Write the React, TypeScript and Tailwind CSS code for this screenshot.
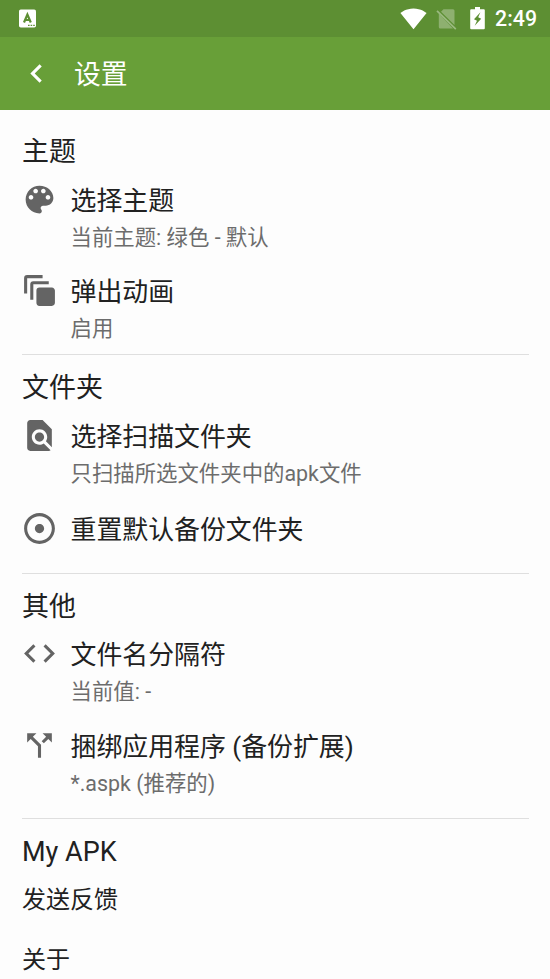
import React from 'react';
import { MdAdjust, MdAutoAwesomeMotion, MdFindInPage, MdCallSplit, MdCode, MdSignalWifi4Bar, MdChevronLeft } from 'react-icons/md';

const font = "font-['Roboto','Noto_Sans_CJK_SC',sans-serif]";

function Heading({ children }: { children: string }) {
  return <h2 className="text-[27px] leading-8 text-[#212121]">{children}</h2>;
}

function Palette() {
  return (
    <svg width="37" height="37" viewBox="0 0 24 24" fill="currentColor">
      <path d="M12 3c-4.97 0-9 4.03-9 9s4.03 9 9 9c.83 0 1.5-.67 1.5-1.5 0-.39-.15-.74-.39-1.01-.23-.26-.38-.61-.38-.99 0-.83.67-1.5 1.5-1.5H16c2.76 0 5-2.24 5-5 0-4.42-4.03-8-9-8zm-5.5 9c-.83 0-1.5-.67-1.5-1.5S5.67 9 6.5 9 8 9.67 8 10.5 7.33 12 6.5 12zm3-4C8.67 8 8 7.33 8 6.5S8.67 5 9.5 5s1.5.67 1.5 1.5S10.33 8 9.5 8zm5 0c-.83 0-1.5-.67-1.5-1.5S13.67 5 14.5 5s1.5.67 1.5 1.5S15.33 8 14.5 8zm3 4c-.83 0-1.5-.67-1.5-1.5S16.67 9 17.5 9s1.5.67 1.5 1.5-.67 1.5-1.5 1.5z" />
    </svg>
  );
}

function Row({ icon, title, sub, className }: { icon: React.ReactNode; title: string; sub?: string; className: string }) {
  return (
    <div className={`flex ${className}`}>
      <div className="-ml-[1px] -mt-[2px] h-[37px] w-[37px] shrink-0 text-[#646464]">{icon}</div>
      <div className="ml-[12.5px] whitespace-nowrap">
        <div className="text-[25.9px] leading-9 text-[#212121]">{title}</div>
        {sub && <div className="mt-[3px] -mb-[1px] text-[21.4px] leading-8 text-[#6c6c6c]">{sub}</div>}
      </div>
    </div>
  );
}

export default function App() {
  return (
    <div className={`h-[979px] w-[550px] overflow-hidden bg-[#fdfdfd] ${font}`}>
      <div className="flex h-[37px] items-center bg-[#5d8f33] pr-[13px] pl-[19px] text-white">
        <svg width="17" height="19" viewBox="0 0 17 19">
          <rect y=".5" width="17" height="18" rx="1.8" fill="#fff" />
          <path d="M5 13.5 8.4 5.5 11.8 13.5M6 11h4.8" fill="none" stroke="#5d8f33" strokeWidth="2.2" />
          <path d="M9 16.4h1.6M11.6 16.4h1.6M14.2 16.4h1.6" stroke="#5d8f33" strokeWidth="1.2" />
        </svg>
        <MdSignalWifi4Bar size={27} className="ml-auto" />
        <svg className="ml-[9px]" width="21" height="22" viewBox="0 0 21 22">
          <path d="M7.5 1.2H17q1.5 0 1.5 1.5V17L5 3.8zM2.8 5.8 17 20.4H4.3q-1.5 0-1.5-1.5z" fill="#fff" fillOpacity=".3" />
          <path d="M1 2.8 19.8 21.2" stroke="#fff" strokeOpacity=".38" strokeWidth="1.7" />
        </svg>
        <svg className="ml-[12.5px]" width="15" height="23" viewBox="0 0 15 23">
          <path fillRule="evenodd" fill="#fff" d="M5 0h5v2.2h3.8q1 0 1 1v18q0 1-1 1H1.2q-1 0-1-1v-18q0-1 1-1H5zM10.4 5.2 4 12.2l3 1.5-2.3 5.1 6.5-7.1-3-1.5z" />
        </svg>
        <span className="ml-[10.5px] text-[21.3px] leading-8 font-medium">2:49</span>
      </div>
      <header className="flex h-[73px] items-center bg-[#689f38] pl-[18px] text-white">
        <MdChevronLeft size={37} className="-mt-[1px]" />
        <h1 className="mt-[3px] ml-[19px] text-[26.8px]">设置</h1>
      </header>
      <main className="pr-[21px] pl-[22px] pt-[26px]">
        <section className="h-[219px] border-b border-[#dfdfdf]">
          <Heading>主题</Heading>
          <Row className="mt-[15px]" icon={<Palette />} title="选择主题" sub="当前主题: 绿色 - 默认" />
          <Row className="mt-[21px]" icon={<MdAutoAwesomeMotion size={37} />} title="弹出动画" sub="启用" />
        </section>
        <section className="h-[219px] border-b border-[#dfdfdf] pt-[17px]">
          <Heading>文件夹</Heading>
          <Row className="mt-[15px]" icon={<MdFindInPage size={37} />} title="选择扫描文件夹" sub="只扫描所选文件夹中的apk文件" />
          <Row className="mt-[23px]" icon={<MdAdjust size={37} />} title="重置默认备份文件夹" />
        </section>
        <section className="h-[245px] border-b border-[#dfdfdf] pt-[17px]">
          <Heading>其他</Heading>
          <Row className="mt-[14px]" icon={<MdCode size={37} />} title="文件名分隔符" sub="当前值: -" />
          <Row className="mt-[22px]" icon={<MdCallSplit size={37} />} title="捆绑应用程序 (备份扩展)" sub="*.aspk (推荐的)" />
        </section>
        <section className="pt-[17px] text-[#212121]">
          <Heading>My APK</Heading>
          <div className="mt-4 text-[24px] leading-8">发送反馈</div>
          <div className="mt-7 text-[24px] leading-8">关于</div>
        </section>
      </main>
    </div>
  );
}
